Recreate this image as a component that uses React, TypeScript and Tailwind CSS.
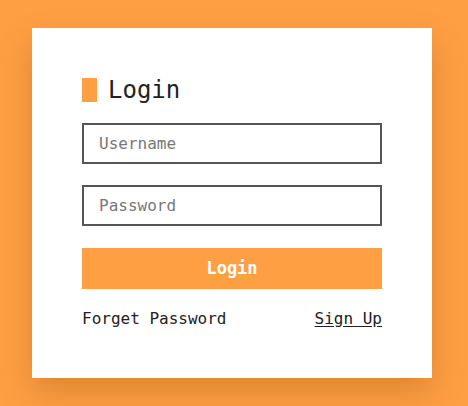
export default function App() {
  return (
    <div
      className="min-h-[406px] w-full bg-[#ff9f43] pl-8 pt-[28px] pb-[28px]"
      style={{ fontFamily: '"DejaVu Sans Mono", "Liberation Mono", monospace' }}
    >
      <div className="w-[400px] bg-white px-[50px] pt-[50px] pb-[47px] shadow-[0_14px_30px_rgba(120,60,0,0.25)]">
        <div className="mb-[21px] flex h-6 items-center gap-[11px]">
          <span className="h-6 w-[15px] bg-[#ff9f43]" />
          <h1 className="text-[24px] leading-6 text-[#222]">Login</h1>
        </div>

        <input
          type="text"
          placeholder="Username"
          className="mb-[21px] block h-[41px] w-full border-2 border-[#555] px-[15px] text-[16px] text-[#333] outline-none placeholder:text-[#777]"
        />
        <input
          type="password"
          placeholder="Password"
          className="mb-[22px] block h-[41px] w-full border-2 border-[#555] px-[15px] text-[16px] text-[#333] outline-none placeholder:text-[#777]"
        />

        <button className="block h-[41px] w-full bg-[#ff9f43] text-[17px] font-bold text-white">
          Login
        </button>

        <div className="mt-[18px] flex items-center justify-between text-[16px] leading-6 text-[#222]">
          <a href="#">Forget Password</a>
          <a href="#" className="underline underline-offset-2">
            Sign Up
          </a>
        </div>
      </div>
    </div>
  );
}
